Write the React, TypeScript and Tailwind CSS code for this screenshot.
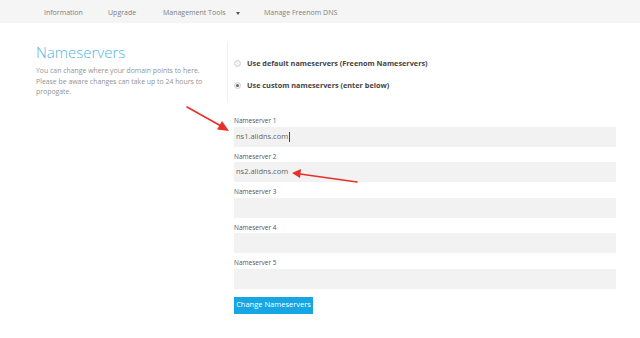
import React from "react";

const fields = [
  { label: "Nameserver 1", value: "ns1.alidns.com", caret: true },
  { label: "Nameserver 2", value: "ns2.alidns.com" },
  { label: "Nameserver 3", value: "" },
  { label: "Nameserver 4", value: "" },
  { label: "Nameserver 5", value: "" },
];

const Radio = ({ checked }: { checked?: boolean }) => (
  <span className="w-[7px] h-[7px] rounded-full border border-[#cfcfcf] bg-[#f3f3f3] flex items-center justify-center shrink-0">
    {checked && <span className="w-[3px] h-[3px] rounded-full bg-[#666]" />}
  </span>
);

const App = () => {
  return (
    <div
      className="relative w-[640px] h-[338px] bg-white overflow-hidden text-[#666]"
      style={{ fontFamily: '"Open Sans", "Liberation Sans", sans-serif' }}
    >
      <nav className="h-[23px] bg-[#f5f5f5] flex items-center pt-[3px] pl-[44px] text-[7px] text-[#808080]">
        <span className="w-[64px]">Information</span>
        <span className="w-[55px]">Upgrade</span>
        <span className="w-[101px] flex items-center">
          Management Tools
          <svg width="4" height="3" viewBox="0 0 4 3" className="ml-[10px]">
            <path d="M0 0h4L2 3z" fill="#555" />
          </svg>
        </span>
        <span>Manage Freenom DNS</span>
      </nav>

      <div className="flex pl-[36px] pr-[24px] pt-[20px]">
        <div className="w-[191px] shrink-0">
          <h1 className="text-[15px] leading-[18px] font-light text-[#55b4e2]">Nameservers</h1>
          <p className="mt-[5px] w-[185px] text-[6.9px] leading-[10.5px] text-[#939393]">
            You can change where your domain points to here. Please be aware changes can take up to 24 hours to propogate.
          </p>
        </div>

        <div className="flex-1 flex flex-col">
          <div className="border-l border-[#efefef] pl-[6px] pt-[15px] pb-[12px] flex flex-col gap-[12px] text-[7.3px] leading-[10px] font-bold text-[#444]">
            <label className="flex items-center gap-[6px]">
              <Radio />
              Use default nameservers (Freenom Nameservers)
            </label>
            <label className="flex items-center gap-[6px]">
              <Radio checked />
              Use custom nameservers (enter below)
            </label>
          </div>

          <div className="pl-[7px] pt-[15px] flex flex-col gap-[6px]">
            {fields.map((f) => (
              <div key={f.label} className="flex flex-col">
                <span className="text-[6.5px] leading-[8.5px] text-[#555] mb-[1px]">{f.label}</span>
                <div className="h-[20px] bg-[#f2f2f2] flex items-center pl-[2px] text-[7.5px] text-[#666]">
                  {f.value}
                  {f.caret && <span className="ml-[1px] w-px h-[10px] bg-[#444]" />}
                </div>
              </div>
            ))}
            <button className="mt-[2px] self-start h-[17px] w-[79px] bg-[#16a6e4] text-white text-[7.5px] whitespace-nowrap">
              Change Nameservers
            </button>
          </div>
        </div>
      </div>

      <svg className="absolute left-0 top-0 pointer-events-none" width="640" height="338">
        <line x1="187" y1="107" x2="221" y2="126" stroke="#e5312a" strokeWidth="1.6" strokeLinecap="round" />
        <polygon points="229,131 217,129.5 222,121" fill="#e5312a" />
        <line x1="357" y1="182" x2="300" y2="174" stroke="#e5312a" strokeWidth="1.6" strokeLinecap="round" />
        <polygon points="292,173 301,169 300,178" fill="#e5312a" />
      </svg>
    </div>
  );
};

export default App;
